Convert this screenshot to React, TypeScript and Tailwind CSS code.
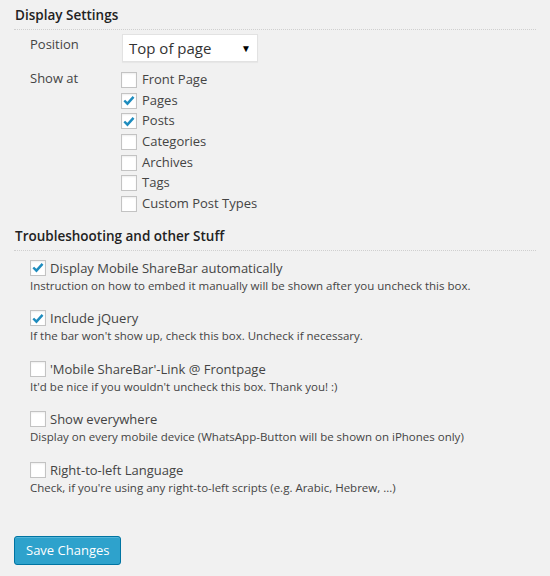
import { ReactNode } from "react";

const showAt = [
  { label: "Front Page", checked: false },
  { label: "Pages", checked: true },
  { label: "Posts", checked: true },
  { label: "Categories", checked: false },
  { label: "Archives", checked: false },
  { label: "Tags", checked: false },
  { label: "Custom Post Types", checked: false },
];

const troubleshooting = [
  {
    label: "Display Mobile ShareBar automatically",
    desc: "Instruction on how to embed it manually will be shown after you uncheck this box.",
    checked: true,
  },
  {
    label: "Include jQuery",
    desc: "If the bar won't show up, check this box. Uncheck if necessary.",
    checked: true,
  },
  {
    label: "'Mobile ShareBar'-Link @ Frontpage",
    desc: "It'd be nice if you wouldn't uncheck this box. Thank you! :)",
    checked: false,
  },
  {
    label: "Show everywhere",
    desc: "Display on every mobile device (WhatsApp-Button will be shown on iPhones only)",
    checked: false,
  },
  {
    label: "Right-to-left Language",
    desc: "Check, if you're using any right-to-left scripts (e.g. Arabic, Hebrew, ...)",
    checked: false,
  },
];

function Checkbox({ checked }: { checked: boolean }) {
  return (
    <span className="flex h-4 w-4 shrink-0 items-center justify-center border border-[#c3c3c3] bg-white shadow-[inset_0_1px_2px_rgba(0,0,0,0.07)]">
      {checked && (
        <svg viewBox="0 0 16 16" className="h-[15px] w-[15px]">
          <path d="M2.6 8 L6.2 11.6 L13.2 3.8" fill="none" stroke="#1e8cbe" strokeWidth="2.8" />
        </svg>
      )}
    </span>
  );
}

function SectionTitle({ children }: { children: ReactNode }) {
  return (
    <h3 className="mx-[14px] border-b border-dotted border-[#cfcfcf] pt-[3px] pb-[3px] pl-px text-[13.5px] leading-[22px] font-semibold text-[#222]">
      {children}
    </h3>
  );
}

export default function App() {
  return (
    <div
      className="min-h-[576px] w-[550px] bg-[#f1f1f1] text-[#444]"
      style={{ fontFamily: '"Open Sans", "Liberation Sans", sans-serif' }}
    >
      <div className="pt-[1px]">
        <SectionTitle>Display Settings</SectionTitle>

        <div className="mt-[4px] flex pl-[30px]">
          <div className="w-[92px] pt-[1px] text-[13px] leading-[18px]">Position</div>
          <div className="flex h-[28px] w-[136px] items-center justify-between border border-[#e2e2e2] bg-white pr-[6px] pl-[6px] shadow-[0_1px_1px_rgba(0,0,0,0.04)]">
            <span className="text-[15px] leading-none text-[#333]">Top of page</span>
            <span className="text-[10px] leading-none text-black">▼</span>
          </div>
        </div>

        <div className="mt-[10px] flex pl-[30px]">
          <div className="w-[91px] text-[13px] leading-[12px]">Show at</div>
          <div className="flex flex-col">
            {showAt.map((o) => (
              <label key={o.label} className="flex h-[20.67px] items-start gap-[5px] text-[13px] leading-[16px]">
                <Checkbox checked={o.checked} />
                <span className="-mt-px">{o.label}</span>
              </label>
            ))}
          </div>
        </div>

        <div className="mt-[5px]">
          <SectionTitle>Troubleshooting and other Stuff</SectionTitle>
        </div>

        <div className="mt-[9px] flex flex-col pl-[30px]">
          {troubleshooting.map((t) => (
            <div key={t.label} className="h-[50.6px]">
              <label className="flex items-center gap-[4px] text-[13px] leading-[16px]">
                <Checkbox checked={t.checked} />
                <span>{t.label}</span>
              </label>
              <p className="mt-[3px] text-[11.5px] leading-[14px]">{t.desc}</p>
            </div>
          ))}
        </div>

        <div className="mt-[23px] pl-[14px]">
          <button className="h-[29px] rounded-[3px] border border-[#0074a2] bg-[#2ea2cc] px-[11px] text-[13px] leading-none text-white shadow-[inset_0_1px_0_rgba(120,200,230,0.5)]">
            Save Changes
          </button>
        </div>
      </div>
    </div>
  );
}
